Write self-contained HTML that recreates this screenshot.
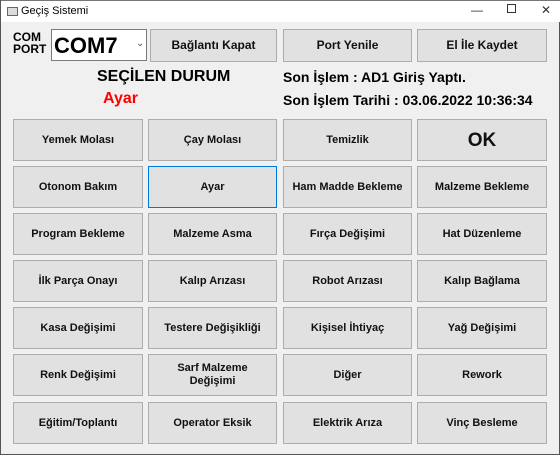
<!DOCTYPE html>
<html><head><meta charset="utf-8"><style>
*{margin:0;padding:0;box-sizing:border-box}
body{width:560px;height:455px;background:#f0f0f0;font-family:"Liberation Sans",sans-serif;position:relative;overflow:hidden;border:1px solid #555;border-top:none}
.tb{position:absolute;left:0;top:0;width:560px;height:22px;background:#fff;border-top:1px solid #777}
.tb .t{position:absolute;left:20px;top:4px;font-size:11px;color:#000}
.ic{position:absolute;left:6px;top:6px;width:11px;height:9px;border:1px solid #666;background:#ddd}
.wc{position:absolute;top:2px;font-size:12px;color:#333}
.b{position:absolute;background:#e1e1e1;border:1px solid #adadad;display:flex;align-items:center;justify-content:center;text-align:center;font-weight:bold;font-size:11px;color:#111;line-height:13px}
.sel{border:1px solid #0078d7}
.a{position:absolute;white-space:nowrap}
</style></head><body>
<div class="tb"><div class="ic"></div><div class="t">Geçiş Sistemi</div>
<div class="wc" style="left:470px">—</div><div class="wc" style="left:506px;top:3px;width:9px;height:9px;border:1px solid #333"></div><div class="wc" style="left:540px;top:2px">✕</div></div>
<div class="a" style="left:12px;top:31px;font-size:12px;font-weight:bold;line-height:12px">COM<br>PORT</div>
<div class="a" style="left:50px;top:29px;width:96px;height:32px;background:#fff;border:1px solid #7a7a7a"><span style="position:absolute;left:2px;top:3px;font-size:22px;font-weight:bold">COM7</span><span style="position:absolute;left:84px;top:8px;font-size:10px;color:#555">⌄</span></div>
<div class="b" style="left:149px;top:29px;width:127px;height:33px;font-size:12px">Bağlantı Kapat</div>
<div class="b" style="left:282px;top:29px;width:129px;height:33px;font-size:12px">Port Yenile</div>
<div class="b" style="left:416px;top:29px;width:130px;height:33px;font-size:12px">El İle Kaydet</div>
<div class="a" style="left:96px;top:68px;font-size:16px;font-weight:bold">SEÇİLEN DURUM</div>
<div class="a" style="left:102px;top:90px;font-size:16px;font-weight:bold;color:#f00">Ayar</div>
<div class="a" style="left:282px;top:69px;font-size:14px;font-weight:bold">Son İşlem : AD1 Giriş Yaptı.</div>
<div class="a" style="left:282px;top:92px;font-size:14px;font-weight:bold">Son İşlem Tarihi : 03.06.2022 10:36:34</div>
<div class="b" style="left:12px;top:119px;width:130px;height:42px">Yemek Molası</div>
<div class="b" style="left:147px;top:119px;width:129px;height:42px">Çay Molası</div>
<div class="b" style="left:282px;top:119px;width:129px;height:42px">Temizlik</div>
<div class="b" style="left:416px;top:119px;width:130px;height:42px;font-size:19px">OK</div>
<div class="b" style="left:12px;top:166px;width:130px;height:42px">Otonom Bakım</div>
<div class="b sel" style="left:147px;top:166px;width:129px;height:42px">Ayar</div>
<div class="b" style="left:282px;top:166px;width:129px;height:42px">Ham Madde Bekleme</div>
<div class="b" style="left:416px;top:166px;width:130px;height:42px">Malzeme Bekleme</div>
<div class="b" style="left:12px;top:213px;width:130px;height:42px">Program Bekleme</div>
<div class="b" style="left:147px;top:213px;width:129px;height:42px">Malzeme Asma</div>
<div class="b" style="left:282px;top:213px;width:129px;height:42px">Fırça Değişimi</div>
<div class="b" style="left:416px;top:213px;width:130px;height:42px">Hat Düzenleme</div>
<div class="b" style="left:12px;top:260px;width:130px;height:42px">İlk Parça Onayı</div>
<div class="b" style="left:147px;top:260px;width:129px;height:42px">Kalıp Arızası</div>
<div class="b" style="left:282px;top:260px;width:129px;height:42px">Robot Arızası</div>
<div class="b" style="left:416px;top:260px;width:130px;height:42px">Kalıp Bağlama</div>
<div class="b" style="left:12px;top:307px;width:130px;height:42px">Kasa Değişimi</div>
<div class="b" style="left:147px;top:307px;width:129px;height:42px">Testere Değişikliği</div>
<div class="b" style="left:282px;top:307px;width:129px;height:42px">Kişisel İhtiyaç</div>
<div class="b" style="left:416px;top:307px;width:130px;height:42px">Yağ Değişimi</div>
<div class="b" style="left:12px;top:354px;width:130px;height:42px">Renk Değişimi</div>
<div class="b" style="left:147px;top:354px;width:129px;height:42px">Sarf Malzeme<br>Değişimi</div>
<div class="b" style="left:282px;top:354px;width:129px;height:42px">Diğer</div>
<div class="b" style="left:416px;top:354px;width:130px;height:42px">Rework</div>
<div class="b" style="left:12px;top:402px;width:130px;height:42px">Eğitim/Toplantı</div>
<div class="b" style="left:147px;top:402px;width:129px;height:42px">Operator Eksik</div>
<div class="b" style="left:282px;top:402px;width:129px;height:42px">Elektrik Arıza</div>
<div class="b" style="left:416px;top:402px;width:130px;height:42px">Vinç Besleme</div>
</body></html>
